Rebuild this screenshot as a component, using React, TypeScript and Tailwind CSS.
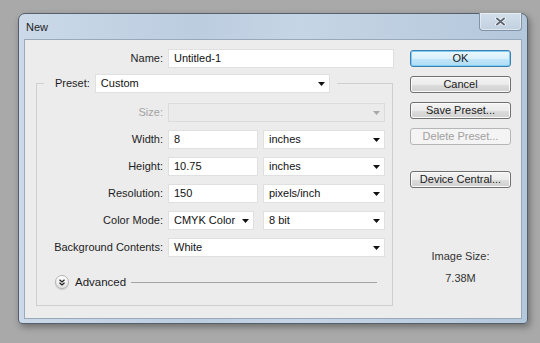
import type { ReactNode } from 'react';

function Arrow({ disabled }: { disabled?: boolean }) {
  return (
    <svg width="7" height="4" viewBox="0 0 7 4" className="shrink-0">
      <polygon points="0,0 7,0 3.5,4" fill={disabled ? '#a8a8a8' : '#111'} />
    </svg>
  );
}

function Dropdown({ value, className, disabled }: { value: string; className: string; disabled?: boolean }) {
  return (
    <div
      className={`h-[19px] flex items-center justify-between pl-[5px] pr-[4px] border ${
        disabled ? 'bg-[#ebebeb] border-[#dcdcdc]' : 'bg-white border-[#e0e0e0]'
      } ${className}`}
    >
      <span className="text-[#111]">{value}</span>
      <Arrow disabled={disabled} />
    </div>
  );
}

function Field({ value, className }: { value: string; className: string }) {
  return (
    <div className={`h-[19px] flex items-center pl-[5px] bg-white border border-[#e0e0e0] text-[#111] ${className}`}>
      {value}
    </div>
  );
}

function Row({ label, disabled, children }: { label: string; disabled?: boolean; children: ReactNode }) {
  return (
    <div className="flex items-center h-[19px]">
      <span className={`w-[126px] mr-[5px] text-right ${disabled ? 'text-[#a3a3a3]' : 'text-[#1c1c24]'}`}>{label}</span>
      {children}
    </div>
  );
}

function Button({ children, variant = 'normal' }: { children: ReactNode; variant?: 'normal' | 'default' | 'disabled' }) {
  const styles = {
    normal:
      'border-[#707070] text-[#1a1a1a] bg-[linear-gradient(#f3f3f3,#ebebeb_50%,#dddddd_51%,#d0d0d0)] shadow-[inset_0_0_0_1px_#fbfbfb]',
    default:
      'border-[#3c7fb1] text-[#1a1a1a] bg-[linear-gradient(#ecf7fd,#daf0fc_50%,#c2e6fa_51%,#aedcf5)] shadow-[inset_0_0_0_1px_#7fcdf2]',
    disabled: 'border-[#b4b6b8] text-[#a0a0a0] bg-[#f4f4f4]',
  };
  return (
    <div className={`h-[17px] w-[101px] flex items-center justify-center rounded-[3px] border ${styles[variant]}`}>
      {children}
    </div>
  );
}

function AdvancedIcon() {
  return (
    <div className="w-[14px] h-[14px] rounded-full border border-[#b3b3b3] bg-[linear-gradient(#ffffff,#e2e2e2)] flex items-center justify-center shadow-[0_1px_1px_rgba(0,0,0,0.15)]">
      <svg width="6" height="7" viewBox="0 0 6 7">
        <path d="M0.5 0.8 L3 3 L5.5 0.8 M0.5 3.8 L3 6 L5.5 3.8" stroke="#222" strokeWidth="1.3" fill="none" />
      </svg>
    </div>
  );
}

export default function App() {
  return (
    <div className="w-[540px] h-[343px] bg-[#a9a9a9] pl-[18px] pt-[13px] font-['Liberation_Sans',Arial,sans-serif] text-[11px] leading-[13px]">
      <div className="w-[510px] h-[311px] flex flex-col px-[5px] rounded-t-[7px] rounded-b-[4px] border border-[#55606c] bg-[linear-gradient(90deg,#cbd9e8,#bccde0_35%,#c6d5e5_55%,#b4c7db)] shadow-[2px_3px_7px_rgba(0,0,0,0.35)]">
        {/* title bar */}
        <div className="h-[25px] flex items-start justify-between">
          <span className="pl-[2px] pt-[7px] text-[#1e1e1e]">New</span>
          <div className="-mt-px w-[43px] h-[18px] flex items-center justify-center rounded-b-[4px] border border-t-0 border-[#8293a6] bg-[linear-gradient(#d3dfeb,#c1d0e0)] shadow-[inset_0_0_0_1px_rgba(255,255,255,0.45)]">
            <svg width="11" height="9" viewBox="0 0 11 9">
              <path d="M2 1.5 L9 7.5 M9 1.5 L2 7.5" stroke="#fff" strokeWidth="3.4" strokeLinecap="round" />
              <path d="M2 1.5 L9 7.5 M9 1.5 L2 7.5" stroke="#5c6672" strokeWidth="2" strokeLinecap="round" />
            </svg>
          </div>
        </div>

        {/* client area */}
        <div className="h-[280px] flex border border-[#98a9bb] bg-[#ececec]">
          <div className="w-[374px] pt-[9px]">
            <div className="flex items-center h-[19px]">
              <span className="w-[138px] mr-[5px] text-right text-[#1c1c24]">Name:</span>
              <Field value="Untitled-1" className="w-[226px]" />
            </div>

            <fieldset className="mt-[6px] ml-[11px] w-[357px] border border-[#cfcfcf] pb-[16px]">
              <legend className="ml-[7px] pl-[11px] pr-[7px]">
                <div className="flex items-center">
                  <span className="mr-[5px] text-[#1c1c24]">Preset:</span>
                  <Dropdown value="Custom" className="w-[235px] h-[18px]" />
                </div>
              </legend>

              <div className="mt-[10px] flex flex-col gap-[8px]">
                <Row label="Size:" disabled>
                  <Dropdown value="" disabled className="w-[217px]" />
                </Row>
                <Row label="Width:">
                  <Field value="8" className="w-[90px] mr-[5px]" />
                  <Dropdown value="inches" className="w-[122px]" />
                </Row>
                <Row label="Height:">
                  <Field value="10.75" className="w-[90px] mr-[5px]" />
                  <Dropdown value="inches" className="w-[122px]" />
                </Row>
                <Row label="Resolution:">
                  <Field value="150" className="w-[90px] mr-[5px]" />
                  <Dropdown value="pixels/inch" className="w-[122px]" />
                </Row>
                <Row label="Color Mode:">
                  <Dropdown value="CMYK Color" className="w-[86px] mr-[9px]" />
                  <Dropdown value="8 bit" className="w-[122px]" />
                </Row>
                <Row label="Background Contents:">
                  <Dropdown value="White" className="w-[217px]" />
                </Row>
              </div>

              <div className="mt-[18px] pl-[18px] pr-[15px] flex items-center h-[14px]">
                <AdvancedIcon />
                <span className="ml-[6px] mr-[5px] text-[11.5px] text-[#1c1c24]">Advanced</span>
                <div className="flex-1 h-px bg-[#a3a3a3]" />
              </div>
            </fieldset>
          </div>

          <div className="ml-auto mr-[10px] w-[101px] pt-[10px] flex flex-col items-center">
            <Button variant="default">OK</Button>
            <div className="mt-[9px]"><Button>Cancel</Button></div>
            <div className="mt-[9px]"><Button>Save Preset...</Button></div>
            <div className="mt-[9px]"><Button variant="disabled">Delete Preset...</Button></div>
            <div className="mt-[26px]"><Button>Device Central...</Button></div>
            <span className="mt-[62px] text-[#333]">Image Size:</span>
            <span className="mt-[9px] text-[#333]">7.38M</span>
          </div>
        </div>
      </div>
    </div>
  );
}
